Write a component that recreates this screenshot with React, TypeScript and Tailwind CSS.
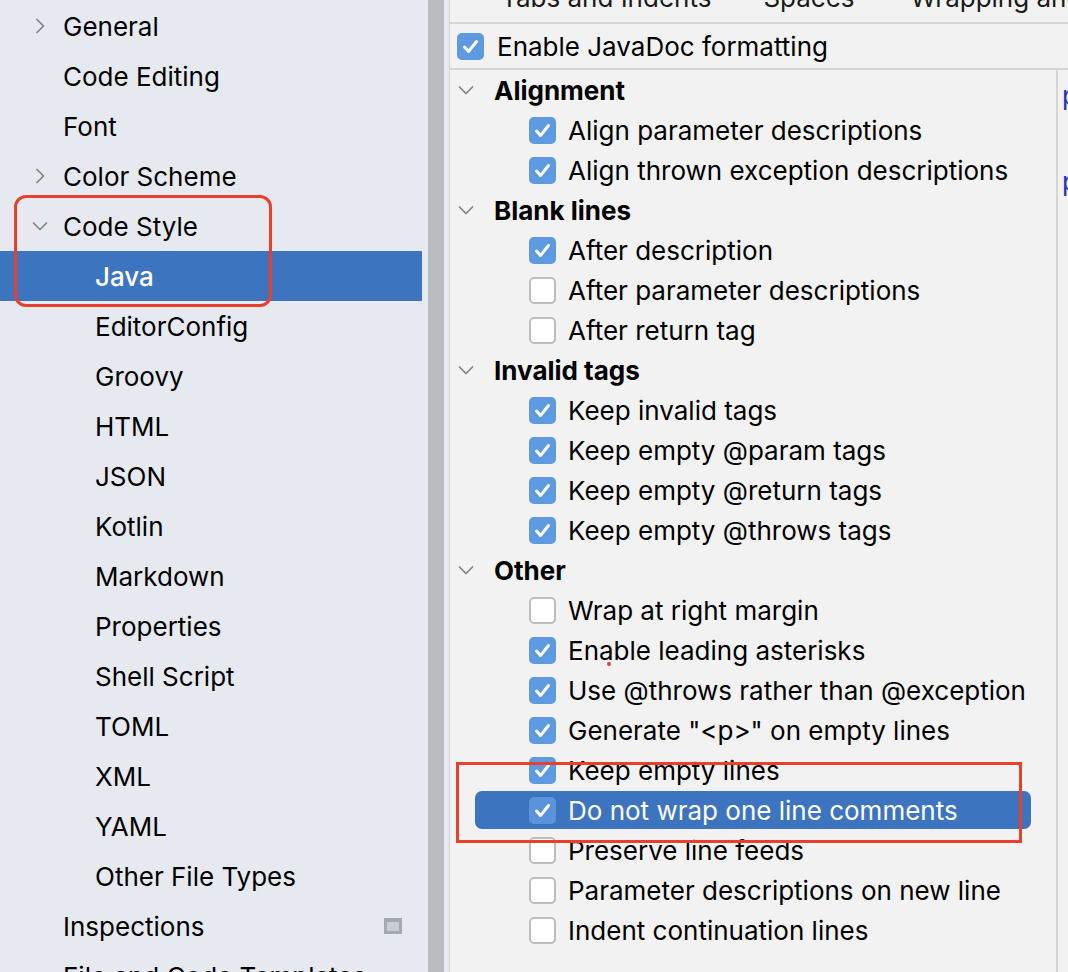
import { ReactNode } from 'react';

const font = { fontFamily: 'Inter, "Noto Sans", sans-serif' };

type NavItem = { label: string; level: 0 | 1; arrow?: 'right' | 'down'; selected?: boolean; icon?: boolean };

const navItems: NavItem[] = [
  { label: 'General', level: 0, arrow: 'right' },
  { label: 'Code Editing', level: 0 },
  { label: 'Font', level: 0 },
  { label: 'Color Scheme', level: 0, arrow: 'right' },
  { label: 'Code Style', level: 0, arrow: 'down' },
  { label: 'Java', level: 1, selected: true },
  { label: 'EditorConfig', level: 1 },
  { label: 'Groovy', level: 1 },
  { label: 'HTML', level: 1 },
  { label: 'JSON', level: 1 },
  { label: 'Kotlin', level: 1 },
  { label: 'Markdown', level: 1 },
  { label: 'Properties', level: 1 },
  { label: 'Shell Script', level: 1 },
  { label: 'TOML', level: 1 },
  { label: 'XML', level: 1 },
  { label: 'YAML', level: 1 },
  { label: 'Other File Types', level: 1 },
  { label: 'Inspections', level: 0, icon: true },
  { label: 'File and Code Templates', level: 0 },
];

type Row = { label: string; heading?: boolean; checked?: boolean; selected?: boolean; dot?: boolean };

const rows: Row[] = [
  { label: 'Alignment', heading: true },
  { label: 'Align parameter descriptions', checked: true },
  { label: 'Align thrown exception descriptions', checked: true },
  { label: 'Blank lines', heading: true },
  { label: 'After description', checked: true },
  { label: 'After parameter descriptions' },
  { label: 'After return tag' },
  { label: 'Invalid tags', heading: true },
  { label: 'Keep invalid tags', checked: true },
  { label: 'Keep empty @param tags', checked: true },
  { label: 'Keep empty @return tags', checked: true },
  { label: 'Keep empty @throws tags', checked: true },
  { label: 'Other', heading: true },
  { label: 'Wrap at right margin' },
  { label: 'Enable leading asterisks', checked: true, dot: true },
  { label: 'Use @throws rather than @exception', checked: true },
  { label: 'Generate "<p>" on empty lines', checked: true },
  { label: 'Keep empty lines', checked: true },
  { label: 'Do not wrap one line comments', checked: true, selected: true },
  { label: 'Preserve line feeds' },
  { label: 'Parameter descriptions on new line' },
  { label: 'Indent continuation lines' },
];

function Chevron({ dir }: { dir: 'right' | 'down' }) {
  return (
    <svg width="16" height="16" viewBox="0 0 16 16" fill="none">
      <path
        d={dir === 'right' ? 'M5 1.5 L11.5 8 L5 14.5' : 'M1.5 5 L8 11.5 L14.5 5'}
        stroke="#828282"
        strokeWidth="1.7"
        strokeLinecap="round"
        strokeLinejoin="round"
      />
    </svg>
  );
}

function Checkbox({ checked, onBlue }: { checked?: boolean; onBlue?: boolean }) {
  if (!checked) {
    return <div className="w-[27px] h-[27px] shrink-0 rounded-[5px] bg-white border-2 border-[#bdbdbd]" />;
  }
  return (
    <div
      className={`w-[27px] h-[27px] shrink-0 rounded-[5px] flex items-center justify-center ${
        onBlue ? 'bg-[#5b92da]' : 'bg-[#5d9ae0]'
      }`}
    >
      <svg width="27" height="27" viewBox="0 0 27 27" fill="none">
        <path d="M7.5 14 L11.5 18.5 L19.5 8.5" stroke="white" strokeWidth="3" strokeLinecap="round" strokeLinejoin="round" />
      </svg>
    </div>
  );
}

function Sidebar() {
  return (
    <aside className="relative w-[428px] shrink-0 bg-[#e6e9ef] pt-[1px]">
      {navItems.map((item) => (
        <div
          key={item.label}
          className={`h-[50px] flex items-center text-[26px] w-[422px] whitespace-nowrap ${
            item.selected ? 'bg-[#3d74bf] text-white font-medium' : 'text-black'
          }`}
        >
          {item.level === 0 ? (
            <>
              <div className="w-[63px] shrink-0 pl-[32px]">{item.arrow && <Chevron dir={item.arrow} />}</div>
              <span>{item.label}</span>
            </>
          ) : (
            <span className="pl-[95px]">{item.label}</span>
          )}
          {item.icon && (
            <div className="ml-auto mr-[20px] w-[18px] h-[16px] border-[3px] border-t-[4px] border-[#a3a9b0] bg-[#c9cdd3]" />
          )}
        </div>
      ))}
      <div className="absolute left-[14px] top-[195px] w-[258px] h-[112px] border-[3px] border-[#e8402b] rounded-[12px]" />
    </aside>
  );
}

function TreeRow({ row }: { row: Row }): ReactNode {
  if (row.heading) {
    return (
      <div className="h-[40px] flex items-center">
        <div className="w-[44px] pl-[8px] shrink-0">
          <Chevron dir="down" />
        </div>
        <span className="font-bold">{row.label}</span>
      </div>
    );
  }
  if (row.selected) {
    return (
      <div className="h-[40px] py-px mx-[25px]">
        <div className="h-full rounded-[7px] bg-[#3d74bf] flex items-center pl-[54px] gap-[12px] text-white">
          <Checkbox checked={row.checked} onBlue />
          <span>{row.label}</span>
        </div>
      </div>
    );
  }
  return (
    <div className="relative h-[40px] flex items-center pl-[79px] gap-[12px]">
      <Checkbox checked={row.checked} />
      <span>{row.label}</span>
      {row.dot && <div className="absolute left-[157px] top-[32px] w-[4px] h-[4px] rounded-full bg-[#e8402b]" />}
    </div>
  );
}

export default function App() {
  return (
    <div className="flex h-[972px] w-[1068px] overflow-hidden text-black" style={font}>
      <Sidebar />
      <div className="w-[16px] shrink-0 bg-[#b9bdc0]" />
      <div className="w-[6px] shrink-0 bg-[#e6e9ef] border-r border-[#cfd1d3]" />
      <main className="relative flex-1 min-w-0 bg-[#f2f2f2] flex flex-col text-[26px] whitespace-nowrap">
        <div className="h-[24px] shrink-0 border-b-2 border-[#d5d5d5] overflow-hidden">
          <div className="flex -mt-[22px] pl-[51px] text-[#1a1a1a]">
            <span className="mr-[52px]">Tabs and Indents</span>
            <span className="mr-[56px]">Spaces</span>
            <span>Wrapping and Braces</span>
          </div>
        </div>
        <div className="h-[46px] shrink-0 border-b-2 border-[#d5d5d5] flex items-center pl-[7px] gap-[13px]">
          <Checkbox checked />
          <span>Enable JavaDoc formatting</span>
        </div>
        <div className="flex flex-1 min-h-0">
          <div className="w-[606px] shrink-0">
            {rows.map((row) => (
              <TreeRow key={row.label} row={row} />
            ))}
          </div>
          <div className="flex-1 min-w-0 border-l-2 border-[#d5d5d5] pl-[4px] text-[#2234b8] overflow-hidden">
            <div className="mt-[6px] leading-[40px]">p</div>
            <div className="mt-[46px] leading-[40px]">p</div>
          </div>
        </div>
        <div className="absolute left-[6px] top-[762px] w-[566px] h-[81px] border-[3px] border-[#e8402b]" />
      </main>
    </div>
  );
}
